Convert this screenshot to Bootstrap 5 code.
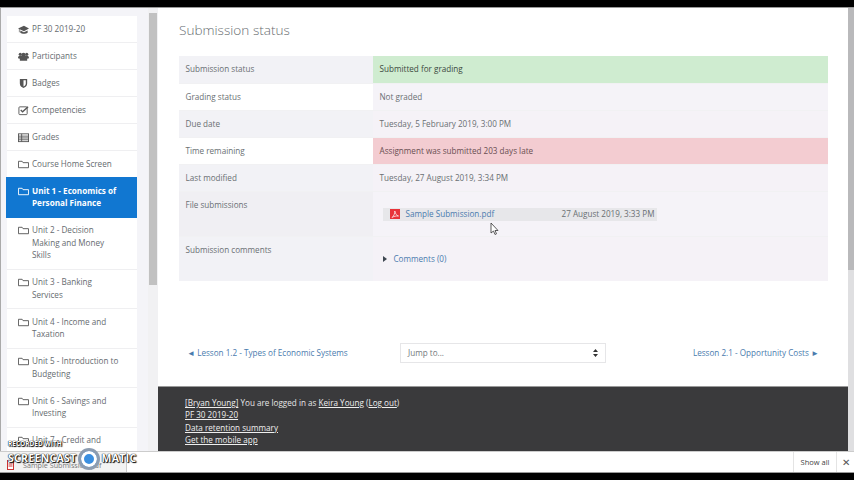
<!DOCTYPE html>
<html lang="en">
<head>
    <meta charset="UTF-8">
    <title>Submission status</title>
    <link href="https://cdn.jsdelivr.net/npm/bootstrap@5.3.0/dist/css/bootstrap.min.css" rel="stylesheet">
    <style>
        html, body { height: 480px; overflow: hidden; background: #000; }
        body { font-family: "Open Sans", "Liberation Sans", sans-serif; font-size: 8.13px; color: #555a5f; }
        .screen { position: relative; height: 480px; padding-top: 7px; padding-bottom: 7px; }
        .browser { height: 466px; background: #fff; border-top: 1px solid #999; }
        .page-area { height: 443px; overflow: hidden; }
        .side-pane { width: 148px; background: #f4f4f8; padding: 8px 11px 0 6px; border-left: 1px solid #aaa; overflow: hidden; flex: none; }
        .side-scroll { width: 10px; background: #f1f1f3; flex: none; padding-top: 5px; }
        .side-thumb { height: 272px; width: 8px; margin-left: 1px; background: #c1c1c1; }
        .side-nav .list-group-item { font-size: 8.13px; line-height: 12.5px; padding: 6.75px 13px 6.75px 11px; color: #666b6f; border-color: #efeff1; display: flex; gap: 3px; }
        .side-nav .list-group-item svg { flex: none; width: 11px; height: 11px; margin-top: 1px; }
        .side-nav .list-group-item.active { background: #1177d1; border-color: #1177d1; color: #fff; font-weight: 700; margin-left: -1px; padding-left: 12px; }
        .main-pane { width: 690px; flex: none; background: #fff; overflow: hidden; }
        .main-inner { height: 378px; padding: 13px 20px 0 21px; }
        .status-title { font-size: 13.6px; font-weight: 300; line-height: 18px; color: #686d71; margin: 0 0 17px; }
        .status-table { width: 649px; margin: 0; table-layout: fixed; border-collapse: collapse; }
        .status-table td { font-size: 8.13px; padding: 7.4px 6.5px 6px; line-height: 12.6px; height: 27px; color: #6a6f73; background: transparent; vertical-align: top; border-bottom: 1px solid #f1f1f3; box-shadow: none; }
        .status-table .label-cell { width: 194px; }
        .status-table tr:nth-child(odd) .label-cell { background: #f2f2f6; }
        .status-table tr:nth-child(even) .value-cell { background: #f5f3f8; }
        .status-table tr:nth-child(odd) .value-cell { background: #f5f2f7; }
        .status-table tr:nth-child(n+6) td { background: #f5f4f8; }
        .status-table tr:nth-child(6) td { background: #f0eff3; height: 45px; }
        .status-table tr:nth-child(7) td { height: 45px; border-bottom: 0; }
        .status-table tr .value-cell.is-ok { background: #cfecd0; color: #3c4a3e; }
        .status-table tr .value-cell.is-late { background: #f3ccd1; color: #6a4e52; }
        .file-row { margin-top: 9px; margin-left: 3px; display: flex; align-items: center; width: 274px; height: 13px; background: #e7e7ea; }
        .file-row .file-name { width: 156px; margin-left: 6px; }
        .pdf-box { width: 10px; height: 10px; margin-left: 7px; flex: none; display: block; }
        .blue-link { color: #4a7bae; text-decoration: none; white-space: nowrap; }
        .comments-row { margin-top: 9px; display: flex; align-items: center; gap: 7px; padding-left: 3px; }
        .tri { width: 0; height: 0; border-left: 4px solid #3d4650; border-top: 3px solid transparent; border-bottom: 3px solid transparent; }
        .jump-row { margin-top: 62px; padding: 0 9px 0 8px; height: 20px; }
        .jump-left { width: 213px; flex: none; }
        .jump-box { width: 206px; height: 20px; border: 1px solid #e6e6e8; font-size: 8.13px; line-height: 18px; padding: 0 7px; color: #74797d; flex: none; }
        .site-foot { height: 65px; background: #3a3a3c; color: #e6e6e6; padding: 10px 27px; font-size: 8.13px; line-height: 12.4px; border-top: 1px solid #999; }
        .site-foot a { color: #efefef; }
        .page-scroll { width: 6px; background: #dfdfe1; flex: none; }
        .page-scroll-thumb { height: 262px; background: #b9b9bb; }
        .dl-bar { height: 22px; background: #fff; border-top: 1px solid #ccc; border-bottom: 1px solid #999; }
        .dl-chip { width: 127px; background: #f3f3f3; border-right: 1px solid #ccc; padding: 6px 0 0 7px; gap: 9px; color: #777; font-size: 7.2px; }
        .show-all { font-size: 7.5px; color: #444; border-left: 1px solid #e4e4e4; border-right: 1px solid #e4e4e4; width: 44px; line-height: 21px; text-align: center; }
        .dl-close { width: 17px; text-align: center; font-size: 10px; color: #555; line-height: 21px; }
        .cast-mark { position: absolute; left: 8px; top: 441px; color: #fff; line-height: 1; text-shadow: 0 0 1px #000, 0 0 1px #000, 1px 1px 1px #000; pointer-events: none; }
        .cast-small { font-size: 6.5px; font-weight: 700; }
        .cast-big { font-size: 10.5px; font-weight: 700; letter-spacing: .3px; display: flex; align-items: center; height: 22px; }
        .cast-dot { display: block; width: 22px; height: 22px; margin: 0 2px 0 1px; border-radius: 50%; background: #3b8fe0; border: 3px solid #8c9cb0; box-shadow: inset 0 0 0 3px #fff; flex: none; }
        .pointer { position: absolute; left: 490px; top: 222px; }
    </style>
</head>
<body>
<div class="screen">
    <div class="browser d-flex flex-column">
        <div class="page-area d-flex">
            <div class="side-pane">
                <div class="list-group list-group-flush side-nav">
                    <div class="list-group-item"><svg viewBox="0 0 12 12"><path d="M0 5 6.500 2 12 5 6.500 8zM2.500 7v2.500c2 1.500 6 1.500 8 0V7L6.500 9zM1 5.500V9h.7V5.500z" fill="#555"/></svg>PF 30 2019-20</div>
                    <div class="list-group-item"><svg viewBox="0 0 12 12"><circle cx="2.500" cy="3.500" r="1.700" fill="#555"/><circle cx="9.500" cy="3.500" r="1.700" fill="#555"/><circle cx="6" cy="4" r="2.200" fill="#555"/><path d="M0 8c0-2 1-3 2.500-3h7C11 5 12 6 12 8l-2 .5V10.500H2V8.500z" fill="#555"/></svg>Participants</div>
                    <div class="list-group-item"><svg viewBox="0 0 12 12"><path d="M2 1h8v5c0 3-2 4-4 5-2-1-4-2-4-5z" fill="#555"/><path d="M6 2.500h2.500V6c0 1.500-1 2.500-2.500 3.200z" fill="#fff"/></svg>Badges</div>
                    <div class="list-group-item"><svg viewBox="0 0 12 12"><rect x="1" y="2" width="9" height="8.500" rx="1" fill="none" stroke="#555"/><path d="M3 5.500l2 2L11 2" fill="none" stroke="#555" stroke-width="1.500"/></svg>Competencies</div>
                    <div class="list-group-item"><svg viewBox="0 0 12 12"><rect x=".5" y="2" width="11" height="8.500" fill="none" stroke="#555"/><path d="M.5 4.500h11M.5 6.500h11M.5 8.500h11M4 2v8.500" stroke="#555" fill="none"/></svg>Grades</div>
                    <div class="list-group-item"><svg viewBox="0 0 12 12"><path d="M.5 9.500V2.500h4l1 1.500h6v5.500z" fill="none" stroke="#555"/></svg>Course Home Screen</div>
                    <div class="list-group-item active"><svg viewBox="0 0 12 12"><path d="M.5 9.500V2.500h4l1 1.500h6v5.500z" fill="none" stroke="#fff"/></svg><span>Unit 1 - Economics of Personal Finance</span></div>
                    <div class="list-group-item"><svg viewBox="0 0 12 12"><path d="M.5 9.500V2.500h4l1 1.500h6v5.500z" fill="none" stroke="#555"/></svg><span>Unit 2 - Decision<br>Making and Money<br>Skills</span></div>
                    <div class="list-group-item"><svg viewBox="0 0 12 12"><path d="M.5 9.500V2.500h4l1 1.500h6v5.500z" fill="none" stroke="#555"/></svg><span>Unit 3 - Banking<br>Services</span></div>
                    <div class="list-group-item"><svg viewBox="0 0 12 12"><path d="M.5 9.500V2.500h4l1 1.500h6v5.500z" fill="none" stroke="#555"/></svg><span>Unit 4 - Income and Taxation</span></div>
                    <div class="list-group-item"><svg viewBox="0 0 12 12"><path d="M.5 9.500V2.500h4l1 1.500h6v5.500z" fill="none" stroke="#555"/></svg><span>Unit 5 - Introduction to Budgeting</span></div>
                    <div class="list-group-item"><svg viewBox="0 0 12 12"><path d="M.5 9.500V2.500h4l1 1.500h6v5.500z" fill="none" stroke="#555"/></svg><span>Unit 6 - Savings and Investing</span></div>
                    <div class="list-group-item"><svg viewBox="0 0 12 12"><path d="M.5 9.500V2.500h4l1 1.500h6v5.500z" fill="none" stroke="#555"/></svg><span>Unit 7 - Credit and</span></div>
                </div>
            </div>
            <div class="side-scroll"><div class="side-thumb"></div></div>
            <div class="main-pane">
                <div class="main-inner">
                    <h3 class="status-title">Submission status</h3>
                    <table class="table status-table">
                        <tr><td class="label-cell">Submission status</td><td class="value-cell is-ok">Submitted for grading</td></tr>
                        <tr><td class="label-cell">Grading status</td><td class="value-cell">Not graded</td></tr>
                        <tr><td class="label-cell">Due date</td><td class="value-cell">Tuesday, 5 February 2019, 3:00 PM</td></tr>
                        <tr><td class="label-cell">Time remaining</td><td class="value-cell is-late">Assignment was submitted 203 days late</td></tr>
                        <tr><td class="label-cell">Last modified</td><td class="value-cell">Tuesday, 27 August 2019, 3:34 PM</td></tr>
                        <tr><td class="label-cell">File submissions</td><td class="value-cell">
                            <div class="file-row"><svg class="pdf-box" viewBox="0 0 10 10"><rect width="10" height="10" fill="#e8343a"/><path d="M2 8.500C4 7 5 4 4.800 2 5.500 5 6.500 6.500 8.500 7 6 6.800 4 7.300 2 8.500z" fill="none" stroke="#fff" stroke-width=".7"/></svg><a class="blue-link file-name" href="#">Sample Submission.pdf</a><span class="text-nowrap">27 August 2019, 3:33 PM</span></div>
                        </td></tr>
                        <tr><td class="label-cell">Submission comments</td><td class="value-cell">
                            <div class="comments-row"><span class="tri"></span><a class="blue-link" href="#">Comments (0)</a></div>
                        </td></tr>
                    </table>
                    <div class="jump-row d-flex align-items-center">
                        <div class="jump-left"><a class="blue-link" href="#">◄ Lesson 1.2 - Types of Economic Systems</a></div>
                        <div class="jump-box d-flex justify-content-between align-items-center"><span>Jump to...</span><svg width="5" height="8" viewBox="0 0 5 8"><path d="M2.500 0 5 3H0zM2.500 8 0 5h5z" fill="#333"/></svg></div>
                        <a class="blue-link ms-auto" href="#">Lesson 2.1 - Opportunity Costs ►</a>
                    </div>
                </div>
                <div class="site-foot">
                    <div><a href="#">[Bryan Young]</a> You are logged in as <a href="#">Keira Young</a> (<a href="#">Log out</a>)</div>
                    <div><a href="#">PF 30 2019-20</a></div>
                    <div><a href="#">Data retention summary</a></div>
                    <div><a href="#">Get the mobile app</a></div>
                </div>
            </div>
            <div class="page-scroll"><div class="page-scroll-thumb"></div></div>
        </div>
        <div class="dl-bar d-flex">
            <div class="dl-chip d-flex align-items-center"><svg width="7" height="10" viewBox="0 0 7 10"><rect x=".5" y=".5" width="6" height="9" fill="#fff" stroke="#c33"/><path d="M1.500 4h4M1.500 6h4" stroke="#c33"/></svg><span>Sample Submission.pdf</span></div>
            <div class="ms-auto show-all">Show all</div>
            <div class="dl-close">✕</div>
        </div>
    </div>
    <svg class="pointer" width="9" height="13" viewBox="0 0 9 13"><path d="M1 1v10l2.500-2 1.500 3.500 1.500-.7L5 8.500h3z" fill="#fff" stroke="#333" stroke-width=".8"/></svg>
    <div class="cast-mark">
        <div class="cast-small">RECORDED WITH</div>
        <div class="cast-big">SCREENCAST<span class="cast-dot"></span>MATIC</div>
    </div>
</div>
<script src="https://cdn.jsdelivr.net/npm/bootstrap@5.3.0/dist/js/bootstrap.bundle.min.js"></script>
</body>
</html>
